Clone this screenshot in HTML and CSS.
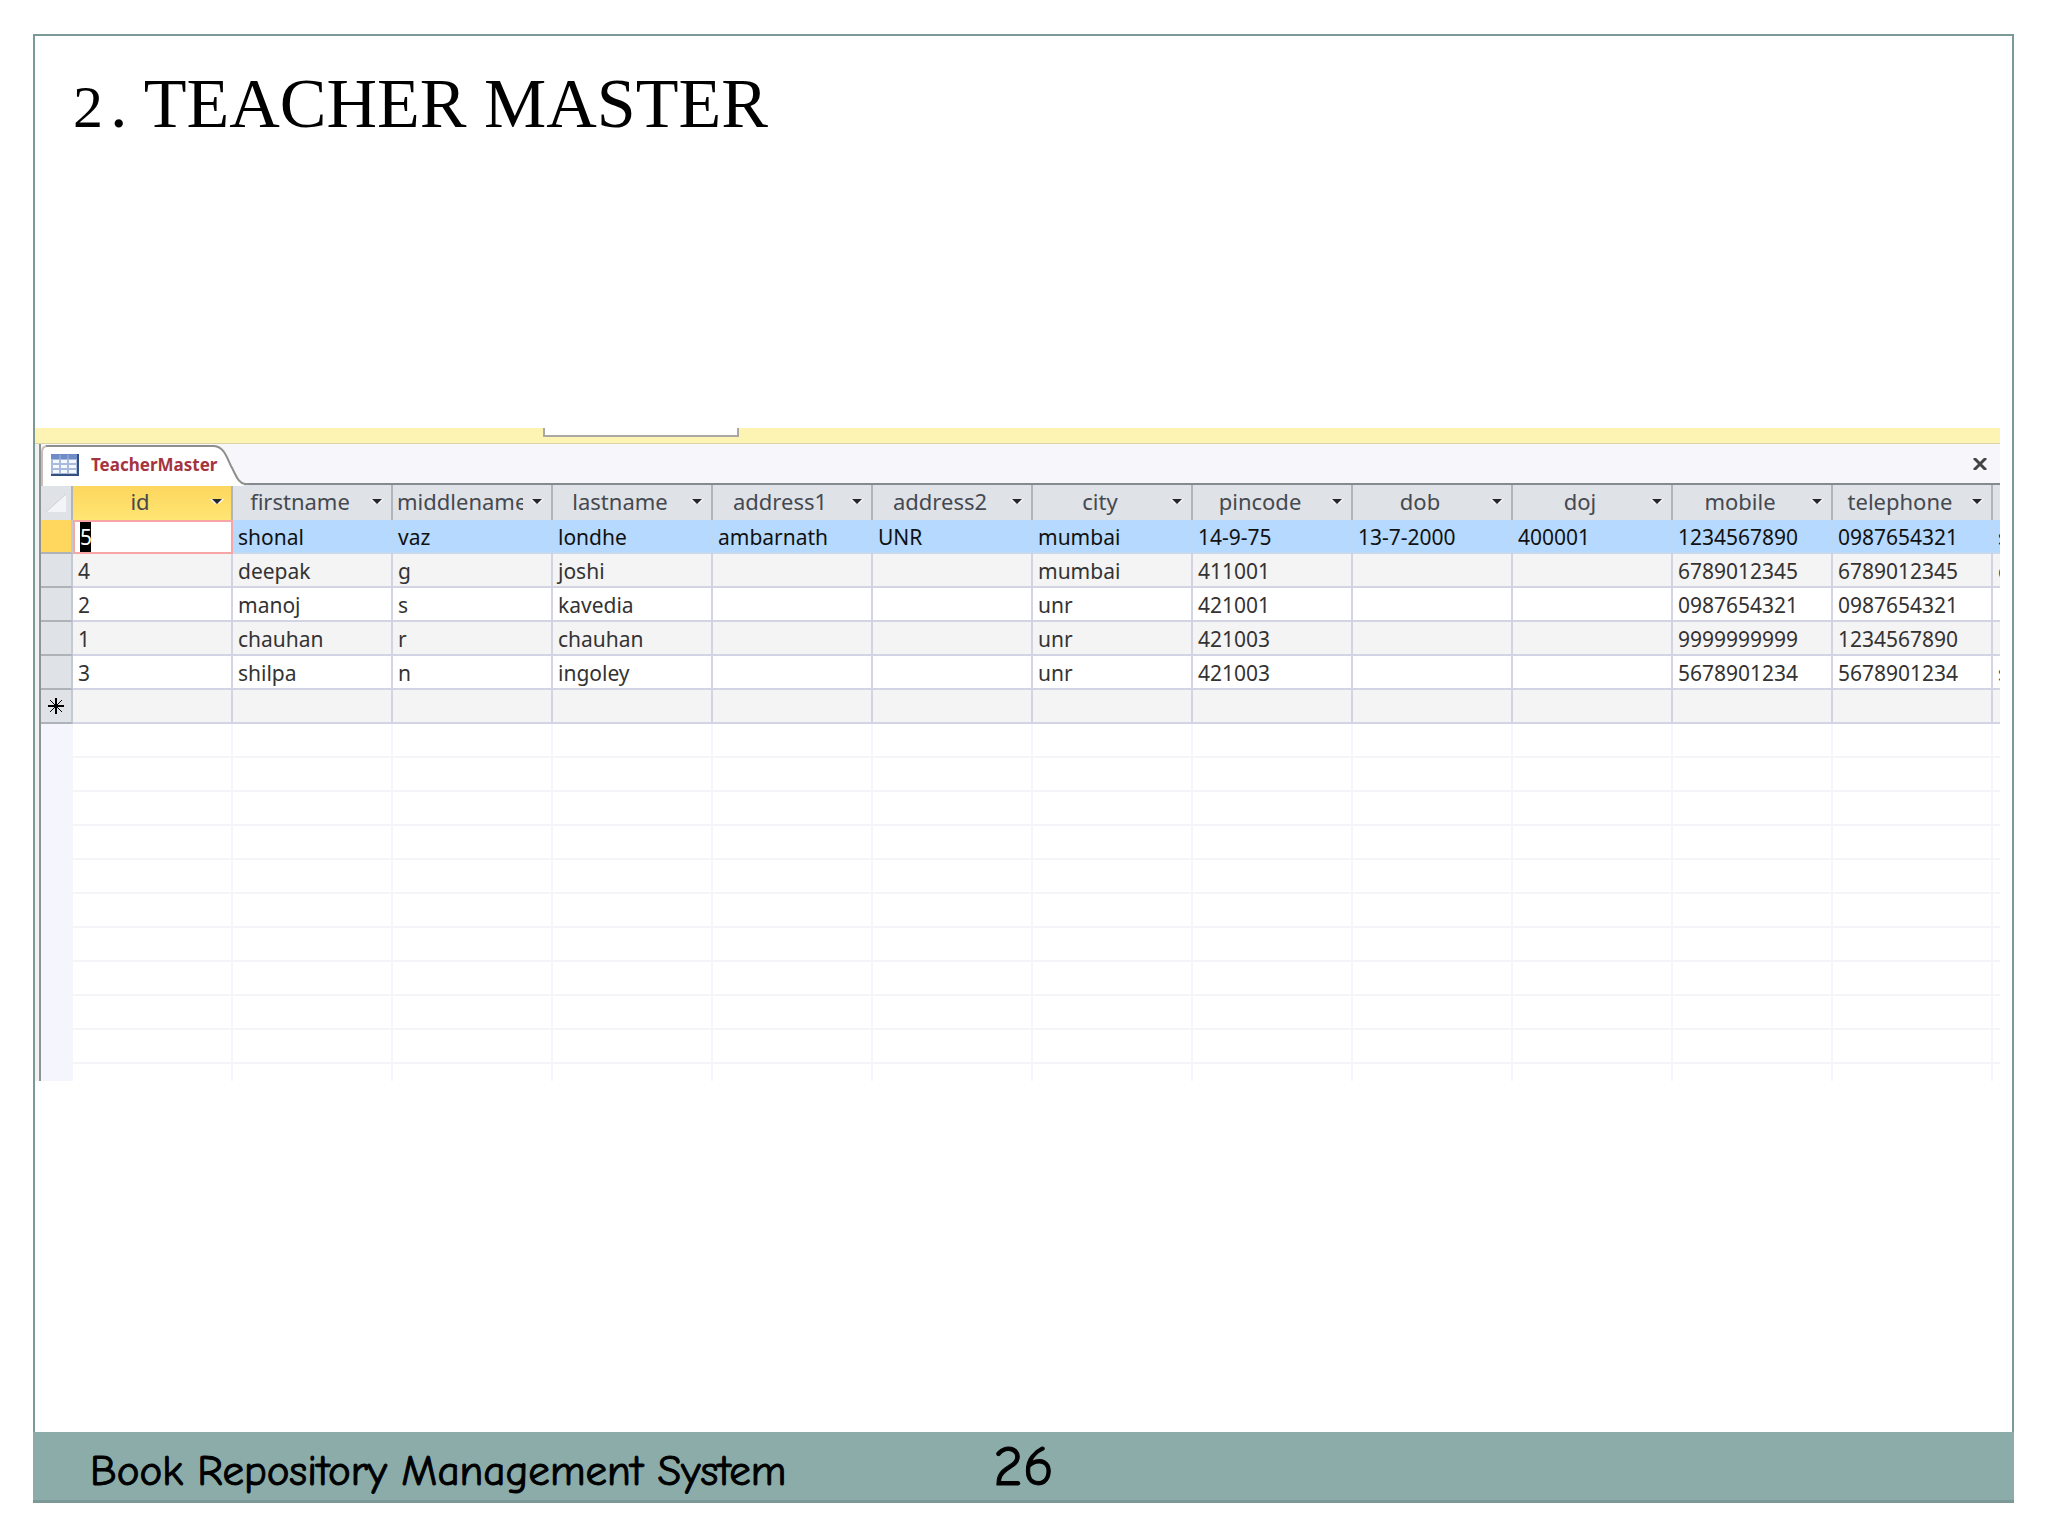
FILE: index.html
```html
<!DOCTYPE html>
<html lang="en">
<head>
  <meta charset="UTF-8" />
  <meta name="viewport" content="width=device-width, initial-scale=1" />
  <title>Book Repository Management System - Teacher Master</title>
  <link rel="stylesheet" href="styles.css">
</head>
<body>

<div class="slide">
  <h1 class="slide-title"><span class="numeral">2</span>. TEACHER MASTER</h1>

  <main class="access-window">
    <div class="message-bar"><div class="message-box"></div></div>

    <div class="window-body">
      <div class="tab-bar">
        <button type="button" class="tab">
          <svg class="tab-shape" width="208" height="42" viewBox="0 0 208 42" aria-hidden="true">
            <path d="M1 42V8Q1 2 7 2H172C182 2 185 11 190 22C195 31 197 39 203 40V42Z" fill="#fff"/>
            <path d="M1 42V8Q1 2 7 2" fill="none" stroke="#c9bdb6" stroke-width="2"/>
            <path d="M5 2H172C182 2 185 11 190 22C195 31 197 39 204 40H208" fill="none" stroke="#8d8f8c" stroke-width="2"/>
          </svg>
          <svg class="tab-icon" width="28" height="22" viewBox="0 0 28 22" aria-hidden="true">
            <path d="M0 0H28V22H0Z" fill="#a9bbdc"/>
            <path d="M0 0H26V5H0Z" fill="#6d8cc8"/>
            <path d="M2 6H8V9H2ZM10 6H16V9H10ZM18 6H25V9H18ZM2 11H8V14H2ZM10 11H16V14H10ZM18 11H25V14H18ZM2 16H8V19H2ZM10 16H16V19H10ZM18 16H25V19H18Z" fill="#f4f8ff"/>
            <path d="M9 1V5M17 1V5" stroke="#a9bbdc" stroke-width="1"/>
            <path d="M27 0V21H0" fill="none" stroke="#34507f" stroke-width="2"/>
          </svg>
          <span class="tab-name">TeacherMaster</span>
        </button>
        <button type="button" class="close" aria-label="Close">
          <svg width="14" height="12" viewBox="0 0 14 12" aria-hidden="true"><path d="M1 0L13 12M13 0L1 12" stroke="#444" stroke-width="3"/></svg>
        </button>
      </div>

      <table class="datasheet">
        <colgroup>
          <col class="col-select">
          <col span="13" class="col-field">
        </colgroup>
        <thead>
          <tr>
            <th class="corner"><svg width="20" height="18" viewBox="0 0 20 18" aria-hidden="true"><path d="M20 0V18H0Z" fill="#f3f4f7"/><path d="M20 0L0 18" stroke="#ccd0d8"/></svg></th>
            <th class="current"><div class="field"><span>id</span><button type="button" aria-label="Filter id"></button></div></th>
            <th><div class="field"><span>firstname</span><button type="button" aria-label="Filter firstname"></button></div></th>
            <th><div class="field"><span>middlename</span><button type="button" aria-label="Filter middlename"></button></div></th>
            <th><div class="field"><span>lastname</span><button type="button" aria-label="Filter lastname"></button></div></th>
            <th><div class="field"><span>address1</span><button type="button" aria-label="Filter address1"></button></div></th>
            <th><div class="field"><span>address2</span><button type="button" aria-label="Filter address2"></button></div></th>
            <th><div class="field"><span>city</span><button type="button" aria-label="Filter city"></button></div></th>
            <th><div class="field"><span>pincode</span><button type="button" aria-label="Filter pincode"></button></div></th>
            <th><div class="field"><span>dob</span><button type="button" aria-label="Filter dob"></button></div></th>
            <th><div class="field"><span>doj</span><button type="button" aria-label="Filter doj"></button></div></th>
            <th><div class="field"><span>mobile</span><button type="button" aria-label="Filter mobile"></button></div></th>
            <th><div class="field"><span>telephone</span><button type="button" aria-label="Filter telephone"></button></div></th>
            <th></th>
          </tr>
        </thead>
        <tbody>
          <tr class="selected">
            <th></th><td class="editing"><input type="text" value="5" aria-label="id"></td><td>shonal</td><td>vaz</td><td>londhe</td><td>ambarnath</td><td>UNR</td><td>mumbai</td><td>14-9-75</td><td>13-7-2000</td><td>400001</td><td>1234567890</td><td>0987654321</td><td>s</td>
          </tr>
          <tr>
            <th></th><td>4</td><td>deepak</td><td>g</td><td>joshi</td><td></td><td></td><td>mumbai</td><td>411001</td><td></td><td></td><td>6789012345</td><td>6789012345</td><td>c</td>
          </tr>
          <tr>
            <th></th><td>2</td><td>manoj</td><td>s</td><td>kavedia</td><td></td><td></td><td>unr</td><td>421001</td><td></td><td></td><td>0987654321</td><td>0987654321</td><td></td>
          </tr>
          <tr>
            <th></th><td>1</td><td>chauhan</td><td>r</td><td>chauhan</td><td></td><td></td><td>unr</td><td>421003</td><td></td><td></td><td>9999999999</td><td>1234567890</td><td></td>
          </tr>
          <tr>
            <th></th><td>3</td><td>shilpa</td><td>n</td><td>ingoley</td><td></td><td></td><td>unr</td><td>421003</td><td></td><td></td><td>5678901234</td><td>5678901234</td><td>s</td>
          </tr>
          <tr>
            <th><svg width="16" height="16" viewBox="0 0 16 16" role="img" aria-label="New record"><path d="M8 0V16M0 8H16" stroke="#000" stroke-width="2"/><path d="M2 2L14 14M14 2L2 14" stroke="#000" stroke-width="1"/></svg></th><td></td><td></td><td></td><td></td><td></td><td></td><td></td><td></td><td></td><td></td><td></td><td></td><td></td>
          </tr>
        </tbody>
      </table>

      <div class="empty-grid"></div>
    </div>
  </main>

  <footer class="slide-footer">
    <span class="system-name">Book Repository Management System</span>
    <span class="page-number">26</span>
  </footer>
</div>

</body>
</html>
```
FILE: styles.css
```css
* {
  box-sizing: border-box;
}
body {
  margin: 0;
  padding: 34px 34px 33px 33px;
  min-height: 100vh;
  display: flex;
  background: #fff;
  font-family: "Noto Sans", "Segoe UI", sans-serif;
}
button {
  padding: 0;
  border: none;
  background: none;
  font: inherit;
  cursor: pointer;
}

.slide {
  flex: 1;
  min-width: 0;
  display: flex;
  flex-direction: column;
  border: 2px solid #7b9997;
}
.slide-title {
  margin: 0 0 284px;
  padding: 28px 38px 0;
  font-family: Georgia, "Liberation Serif", serif;
  font-size: 70px;
  font-weight: normal;
  line-height: 80px;
  color: #000;
}
/* old-style figure, lower than the capitals */
.numeral {
  display: inline-block;
  width: 37px;
  font-size: 60px;
  line-height: 1;
}

/* Access window */
.access-window {
  margin-right: 12px;
  overflow: hidden;
}
.message-bar {
  height: 16px;
  background: #fdf3b2;
  border-bottom: 1px solid #d8d2a4;
}
.message-box {
  width: 196px;
  height: 9px;
  margin-left: 508px;
  background: #fff;
  border: 2px solid #aaa8a4;
  border-top: none;
}
.window-body {
  border-left: 2px solid #909396;
  margin-left: 4px;
  box-shadow: -4px 0 #f0f1f1;
}
.tab-bar {
  height: 41px;
  display: flex;
  justify-content: space-between;
  background: #f7f6fa;
  border-bottom: 2px solid #858990;
}
.tab {
  position: relative;
  width: 208px;
  height: 41px;
  display: flex;
  align-items: center;
  gap: 12px;
  padding-left: 10px;
}
.tab-shape {
  position: absolute;
  left: 0;
  top: 0;
}
.tab-icon, .tab-name {
  position: relative;
}
.tab-name {
  font-size: 17px;
  font-weight: bold;
  color: #a5343f;
}
.close {
  display: flex;
  align-items: center;
  padding: 0 13px;
}

.datasheet {
  width: 2112px;
  table-layout: fixed;
  border-collapse: separate;
  border-spacing: 0;
  font-size: 21px;
  line-height: 28px;
  color: #333;
}
.col-select {
  width: 32px;
}
.col-field {
  width: 160px;
}
.datasheet th,
.datasheet td {
  height: 34px;
  padding: 2px 0 0 5px;
  border-right: 2px solid #d2d3e4;
  border-bottom: 2px solid #d2d3e4;
  text-align: left;
  font-weight: normal;
  white-space: nowrap;
  overflow: hidden;
}
.datasheet th {
  background: #dfe2e7;
  border-right-color: #b0b5bd;
}
.datasheet thead th {
  height: 35px;
  padding: 0 0 3px 4px;
  border-bottom: none;
  font-size: 22px;
}
.datasheet tbody th {
  padding: 0;
  border-right-color: #c4c8d2;
  border-bottom-color: #aeb3ba;
  text-align: center;
}
.datasheet th svg {
  display: block;
  margin: 0 auto;
}
.datasheet thead .corner {
  padding: 0;
}
.datasheet thead .current {
  background: linear-gradient(#fdd65d, #ffe573);
}
.field {
  display: flex;
  align-items: center;
}
.field span {
  flex: 1;
  overflow: hidden;
  text-align: center;
  color: #454950;
}
.field button {
  width: 28px;
  display: flex;
  justify-content: center;
}
.field button::before {
  content: "";
  border: 5px solid transparent;
  border-top-color: #24272c;
  border-bottom: none;
  filter: drop-shadow(2px 0 #f7f8fa) drop-shadow(-2px 0 #f7f8fa);
}
.datasheet tbody tr:nth-child(even) td {
  background: #f4f4f4;
}
.datasheet .selected td {
  background: #b5d9ff;
  border-right-color: #bfd5f0;
  border-bottom-color: #c5d9ef;
  color: #111;
}
.datasheet .selected th {
  background: #ffd75e;
}
.datasheet .selected .editing {
  padding-top: 0;
  background: #fff;
  border: 2px solid #f7a5a5;
}
.editing input {
  display: block;
  width: 11px;
  height: 30px;
  padding: 0;
  border: none;
  background: #000;
  color: #fff;
  font: inherit;
  outline: none;
}

/* unused rows below the last record */
.empty-grid {
  height: 357px;
  background:
    linear-gradient(#f5f6fd, #f5f6fd) 0 0 / 30px 100% no-repeat,
    repeating-linear-gradient(transparent 0 32px, #f5f5f9 32px 34px),
    linear-gradient(#f5f5fb, #f5f5fb) 30px 0 / 2px 100% no-repeat,
    repeating-linear-gradient(to right, transparent 0 158px, #f5f5fb 158px 160px) 32px 0 no-repeat;
}

/* Footer */
.slide-footer {
  margin: auto -2px 0;
  height: 69px;
  padding: 0 57px;
  display: grid;
  grid-template-columns: 1fr auto 1fr;
  align-items: baseline;
  background: #8cacaa;
  border-bottom: 1px solid #7b9997;
  font-family: "Comic Sans MS", "Comic Neue", "Noto Sans", cursive;
  line-height: 69px;
  color: #000;
  -webkit-text-stroke: 1px #000;
}
.system-name {
  font-size: 43px;
  white-space: nowrap;
}
.page-number {
  font-size: 57px;
}
```
